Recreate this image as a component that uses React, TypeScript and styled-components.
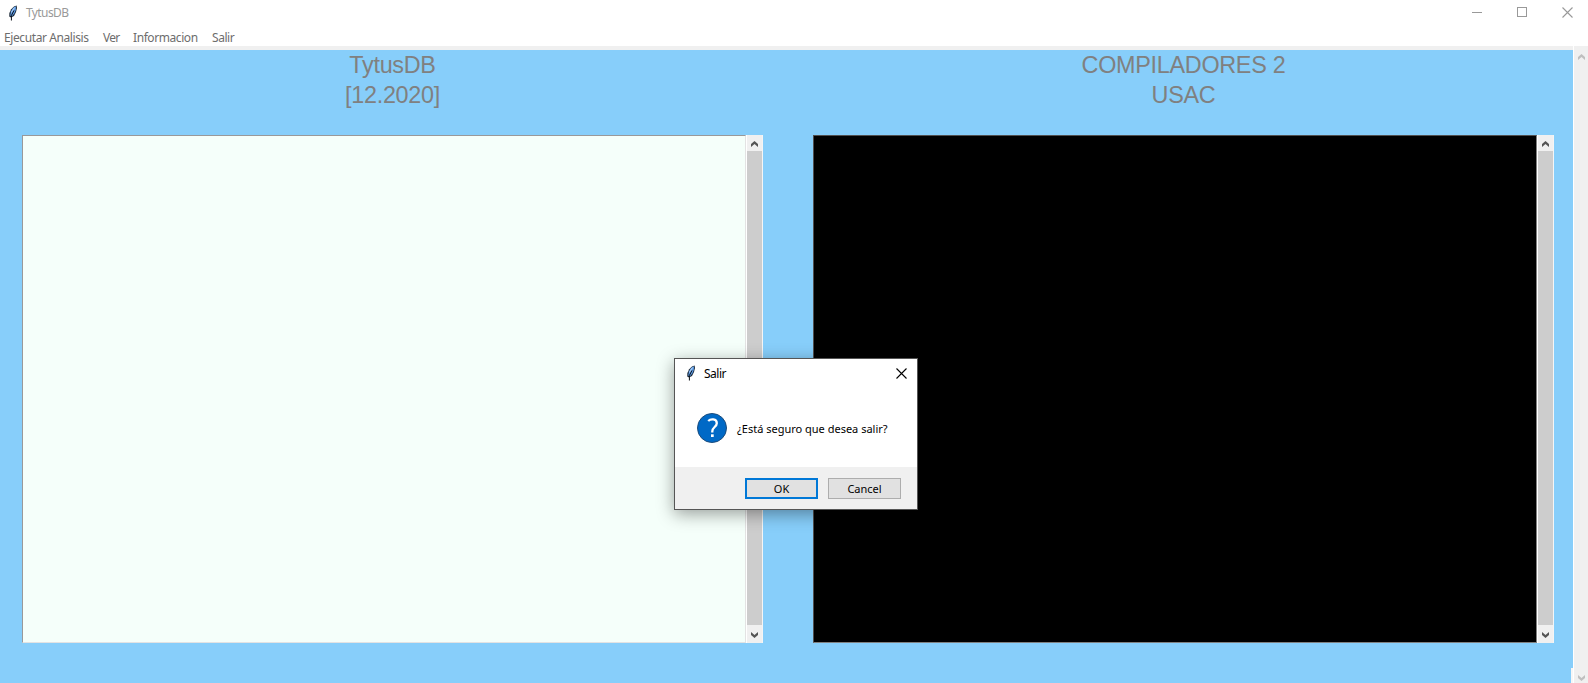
import React from "react";
import styled, { createGlobalStyle } from "styled-components";

const Global = createGlobalStyle`
  *, *::before, *::after { box-sizing: border-box; }
  body { margin: 0; overflow: hidden; background: #fff; }
`;

const ui = `"Noto Sans", "Open Sans", sans-serif`;

const Window = styled.div`
  position: relative;
  width: 1588px;
  height: 683px;
  display: flex;
  flex-direction: column;
  overflow: hidden;
  background: #fff;
  font-family: ${ui};
  font-size: 12px;
`;

const TitleBar = styled.header`
  height: 26px;
  display: flex;
  align-items: center;
  padding-left: 6px;
  color: #999;
`;

const Label = styled.span<{ $w: number; $s?: number }>`
  display: block;
  width: ${(p) => p.$w}px;
  letter-spacing: ${(p) => p.$s ?? 0}px;
  line-height: 16px;
  white-space: nowrap;
`;

const Title = styled(Label)`
  margin-left: 6px;
  flex: 1;
`;

const Controls = styled.div`
  display: flex;
  gap: 35px;
  margin-right: 15px;
  padding-bottom: 1px;
  svg { display: block; }
`;

const MenuBar = styled.nav`
  height: 20px;
  display: flex;
  gap: 14px;
  padding: 4px 4px 0;
  color: #6d6d6d;
`;

const Body = styled.main`
  flex: 1;
  display: flex;
  background: #f0f0f0;
`;

const Canvas = styled.div`
  width: 1573px;
  margin-top: 4px;
  display: flex;
  gap: 50px;
  padding-left: 22px;
  background: #87cefa;
`;

const Column = styled.section`
  width: 741px;
`;

const Heading = styled.h1`
  height: 85px;
  margin: 0;
  font: 400 23.4px/30px "Liberation Sans", Arial, sans-serif;
  letter-spacing: -0.3px;
  color: #808080;
  text-align: center;
`;

const Pane = styled.div`
  display: flex;
  height: 508px;
`;

const TextArea = styled.div<{ $dark?: boolean }>`
  width: 724px;
  border: 1px solid;
  border-color: ${(p) =>
    p.$dark ? "#505050 #808080 #808080 #505050" : "#999 #e3e3e3 #e3e3e3 #999"};
  background: ${(p) => (p.$dark ? "#000" : "#f5fffa")};
`;

const ScrollBar = styled.div`
  width: 17px;
  display: flex;
  flex-direction: column;
  background: #f0f0f0;
  border-left: 1px solid #fff;
  border-right: 1px solid #f5f5f5;
`;

const Arrow = styled.div<{ $h: number; $top: number }>`
  height: ${(p) => p.$h}px;
  padding-top: ${(p) => p.$top}px;
  display: flex;
  justify-content: center;
  svg { display: block; }
`;

const Thumb = styled.div`
  flex: 1;
  background: #cdcdcd;
`;

const PageScroll = styled.div`
  flex: 1;
  display: flex;
  flex-direction: column;
  justify-content: space-between;
  border-left: 1px solid #fff;
`;

const Corner = styled.div`
  position: absolute;
  left: 1571px;
  top: 668px;
  width: 2px;
  height: 15px;
  background: #f6f6f6;
`;

const Dialog = styled.div`
  position: absolute;
  left: 674px;
  top: 358px;
  width: 244px;
  height: 152px;
  display: flex;
  flex-direction: column;
  background: #fff;
  border: 1px solid #555;
  box-shadow: 0 4px 16px rgba(0, 0, 0, 0.38);
  color: #000;
`;

const DialogTitle = styled.div`
  height: 28px;
  display: flex;
  align-items: center;
  padding: 0 10px 0 9px;
  ${Title} { padding-top: 1px; }
`;

const Message = styled.div`
  flex: 1;
  display: flex;
  align-items: center;
  gap: 10px;
  padding: 2px 0 0 22px;
  font-size: 11px;
  ${Label} { padding-top: 2px; }
`;

const Footer = styled.div`
  height: 42px;
  display: flex;
  gap: 10px;
  padding: 11px 0 0 70px;
  background: #f0f0f0;
`;

const Button = styled.button<{ $primary?: boolean }>`
  width: 73px;
  height: 21px;
  padding: 1px 0 0;
  display: flex;
  align-items: center;
  justify-content: center;
  border: ${(p) => (p.$primary ? "2px solid #0078d7" : "1px solid #adadad")};
  background: #e1e1e1;
  font: 11px/16px ${ui};
  color: #000;
`;

const Feather = () => (
  <svg width="14" height="16" viewBox="0 0 14 16">
    <path d="M10.6.5 8 1.5 5.2 4.2 3.4 8 3.2 11.5 5 12.5 8 11 10 7 11 3Z" fill="#1b2836" />
    <path d="M10 1.3 7.2 2.8 5 6.2 4.2 10.4 5.8 11.4 8.4 8.2 9.8 5Z" fill="#5b9be8" />
    <path d="M9.6 1.8 7.2 3.4 5.4 6.6 5 8.6 7.4 5.4Z" fill="#a9cdf5" />
    <path d="M8 5.4 5.4 10.5V15.5" fill="none" stroke="#0a0f16" strokeWidth="1" />
  </svg>
);

const Chevron = ({ down, color = "#555" }: { down?: boolean; color?: string }) => (
  <svg width="7" height="6" viewBox="0 0 7 6">
    <path
      d={down ? "M0 0 3.5 3 7 0V3L3.5 6 0 3Z" : "M0 6 3.5 3 7 6V3L3.5 0 0 3Z"}
      fill={color}
    />
  </svg>
);

const Close = ({ color }: { color: string }) => (
  <svg width="11" height="11" viewBox="0 0 11 11">
    <path d="M.5.5 10.5 10.5M10.5.5.5 10.5" stroke={color} strokeWidth="1.1" />
  </svg>
);

const Question = () => (
  <svg width="30" height="30" viewBox="0 0 30 30">
    <circle cx="15" cy="15" r="14.5" fill="#0069c6" stroke="#1c4c7c" />
    <path
      d="M11.2 8C13.5 5.8 19.8 5.4 19.8 10.2 19.8 13.8 15.3 14.2 15.3 18.2V19.4"
      fill="none"
      stroke="#fff"
      strokeWidth="2.3"
    />
    <rect x="14" y="21.3" width="2.7" height="2.7" fill="#fff" />
  </svg>
);

const Scroll = () => (
  <ScrollBar>
    <Arrow $h={16} $top={6}><Chevron /></Arrow>
    <Thumb />
    <Arrow $h={18} $top={7}><Chevron down /></Arrow>
  </ScrollBar>
);

export default function App() {
  return (
    <Window>
      <Global />
      <TitleBar>
        <Feather />
        <Title $w={42} $s={-0.6}>TytusDB</Title>
        <Controls>
          <svg width="10" height="11"><path d="M0 5.5H10" stroke="#999" /></svg>
          <svg width="10" height="11"><rect x=".5" y=".5" width="9" height="9" fill="none" stroke="#999" /></svg>
          <Close color="#999" />
        </Controls>
      </TitleBar>
      <MenuBar>
        <Label $w={85} $s={-0.4}>Ejecutar Analisis</Label>
        <Label $w={16} $s={-0.8}>Ver</Label>
        <Label $w={65} $s={-0.42}>Informacion</Label>
        <Label $w={24} $s={-0.45}>Salir</Label>
      </MenuBar>
      <Body>
        <Canvas>
          <Column>
            <Heading>TytusDB<br />[12.2020]</Heading>
            <Pane><TextArea /><Scroll /></Pane>
          </Column>
          <Column>
            <Heading>COMPILADORES 2<br />USAC</Heading>
            <Pane><TextArea $dark /><Scroll /></Pane>
          </Column>
        </Canvas>
        <PageScroll>
          <Arrow $h={20} $top={8}><Chevron color="#bfbfbf" /></Arrow>
          <Arrow $h={8} $top={0}><Chevron down color="#bfbfbf" /></Arrow>
        </PageScroll>
      </Body>
      <Corner />
      <Dialog role="dialog">
        <DialogTitle>
          <Feather />
          <Title $w={23} $s={-0.5}>Salir</Title>
          <Close color="#000" />
        </DialogTitle>
        <Message>
          <Question />
          <Label $w={150}>¿Está seguro que desea salir?</Label>
        </Message>
        <Footer>
          <Button $primary>OK</Button>
          <Button>Cancel</Button>
        </Footer>
      </Dialog>
    </Window>
  );
}
